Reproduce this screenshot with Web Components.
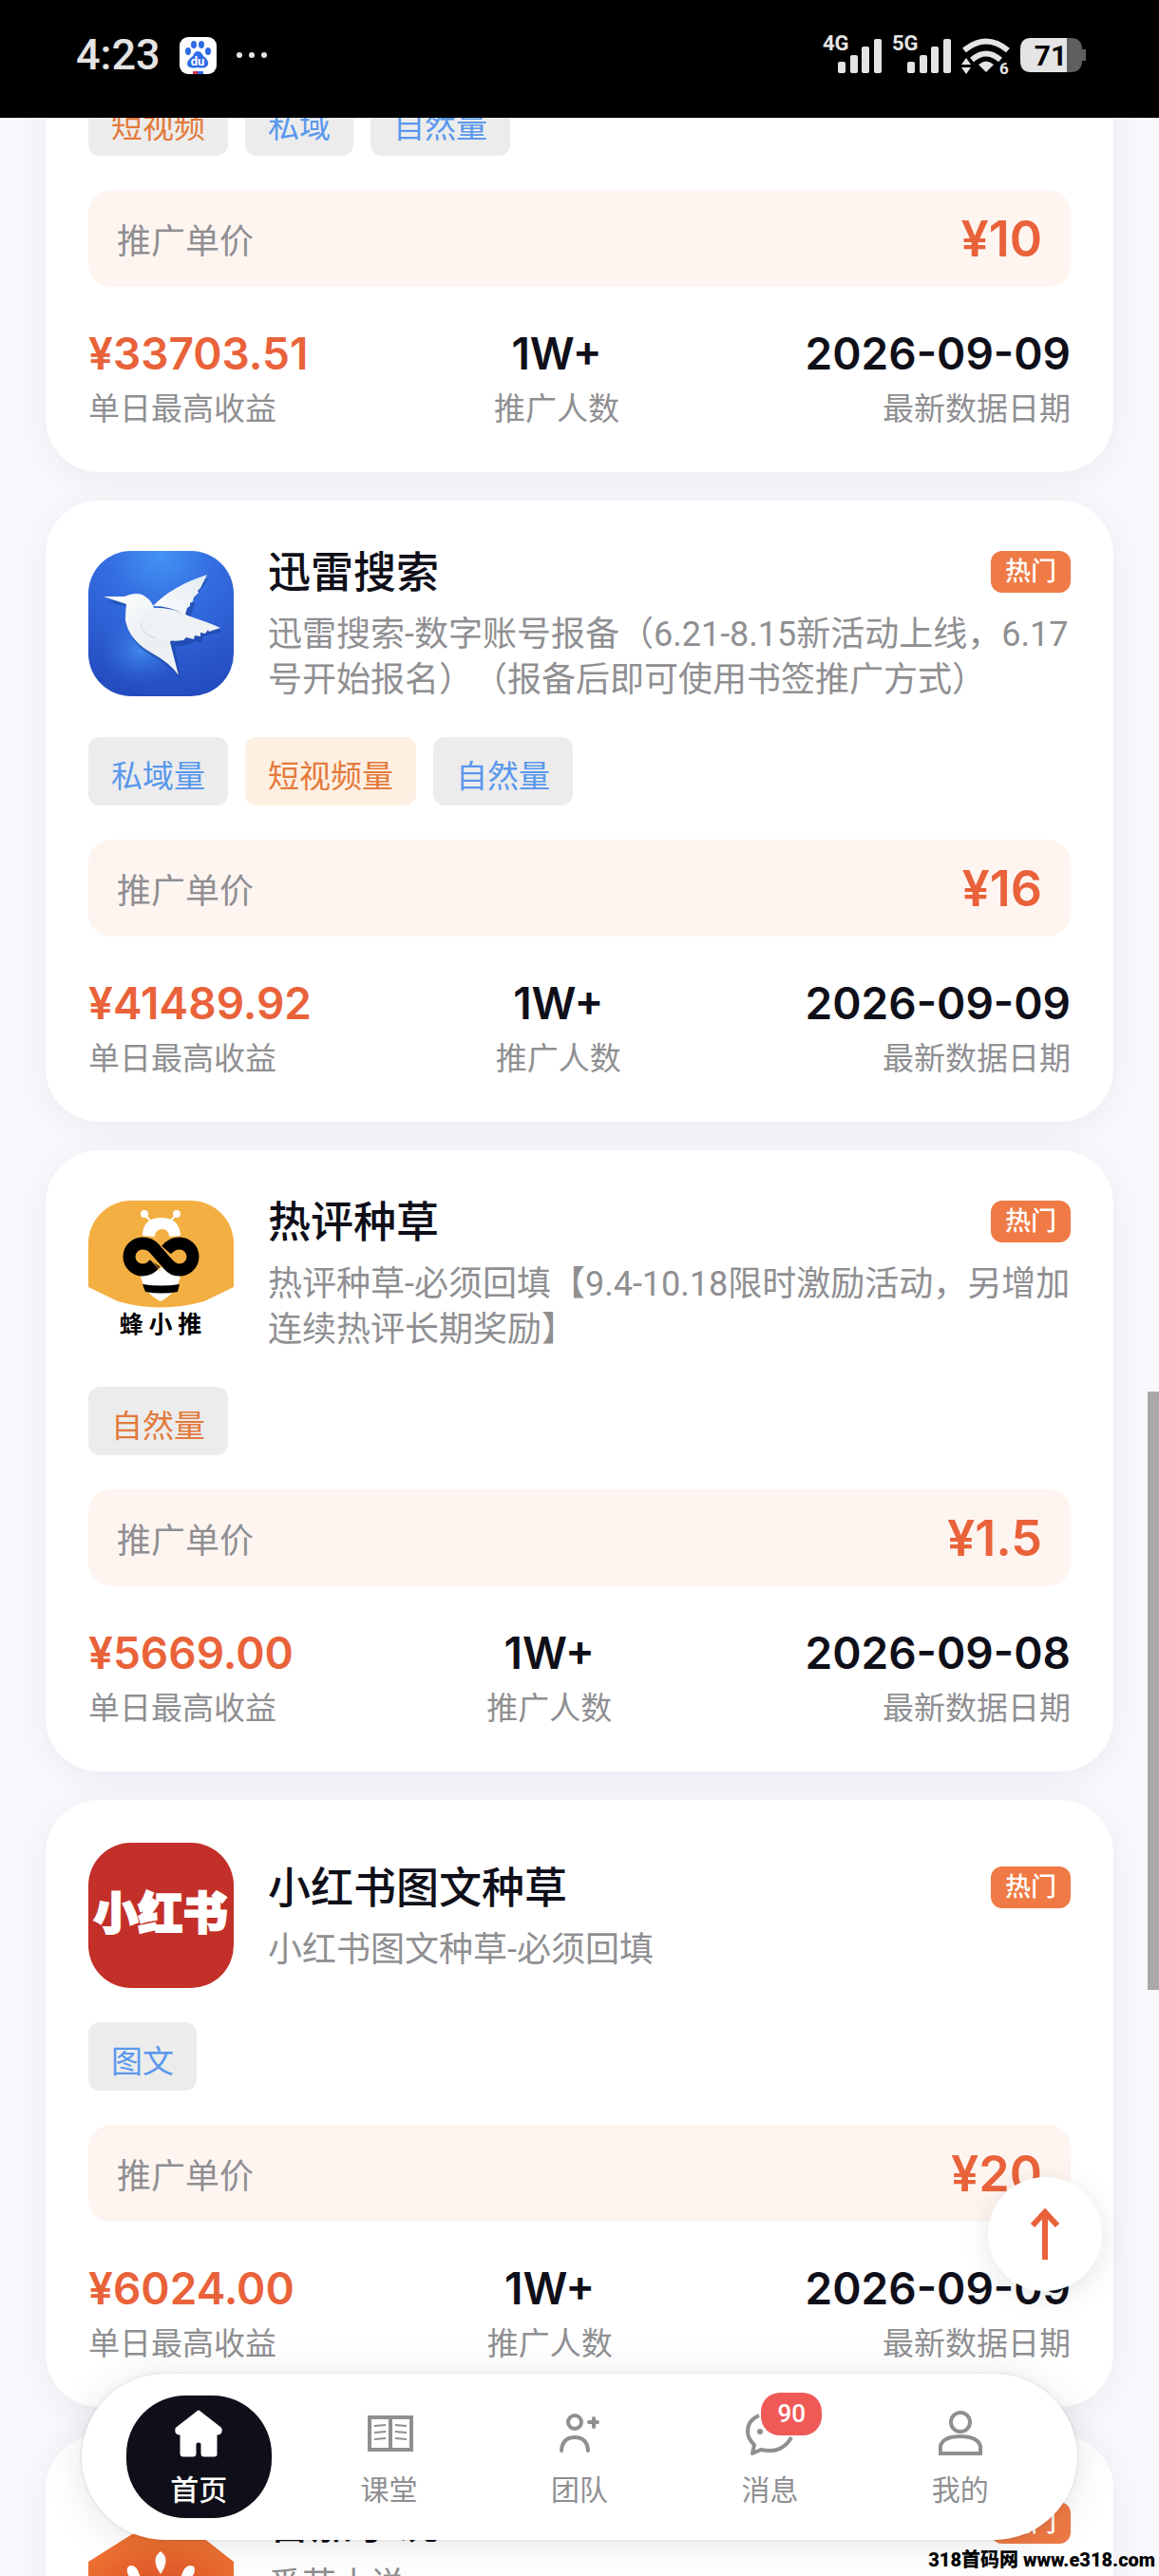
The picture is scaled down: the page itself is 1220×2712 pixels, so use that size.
<!DOCTYPE html>
<html lang="zh-CN">
<head>
<meta charset="UTF-8">
<meta name="viewport" content="width=device-width, initial-scale=1">
<title>首页</title>
<style>
  * { box-sizing: border-box; }
  html, body { height: 100%; margin: 0; }
  body {
    font-family: Roboto, "Noto Sans CJK SC", sans-serif;
    color: #0f0f19;
    background: #f9f9fd;
    text-spacing-trim: space-all;
    --accent: #e9623a;
    --muted: #8f8f92;
    --number-font: Inter, "Noto Sans CJK SC", sans-serif;
  }
</style>
</head>
<body>

<app-shell>
  <status-bar slot="status" time="4:23"></status-bar>

  <task-card price="¥10" income="¥33703.51" people="1W+" date="2026-09-09">
    <task-tag slot="tags" tone="orange">短视频</task-tag>
    <task-tag slot="tags">私域</task-tag>
    <task-tag slot="tags">自然量</task-tag>
  </task-card>

  <task-card name="迅雷搜索" desc="迅雷搜索-数字账号报备（6.21-8.15新活动上线，6.17号开始报名）（报备后即可使用书签推广方式）" price="¥16" income="¥41489.92" people="1W+" date="2026-09-09">
    <svg slot="logo" viewBox="0 0 153 153" aria-hidden="true">
      <defs>
        <radialGradient id="sky" cx=".5" cy=".02" r="1"><stop offset="0" stop-color="#4494f3"/><stop offset=".35" stop-color="#346fe2"/><stop offset="1" stop-color="#244bc0"/></radialGradient>
        <radialGradient id="glow"><stop offset="0" stop-color="#469bf4" stop-opacity=".7"/><stop offset="1" stop-color="#346fe2" stop-opacity="0"/></radialGradient>
        <linearGradient id="body" x1="0" y1="0" x2="1" y2="1"><stop offset="0" stop-color="#fff"/><stop offset=".6" stop-color="#e9eef2"/><stop offset="1" stop-color="#f4f6f8"/></linearGradient>
        <linearGradient id="wing" x1="1" y1="0" x2="0" y2="1"><stop offset="0" stop-color="#dfe8f0"/><stop offset="1" stop-color="#fff"/></linearGradient>
      </defs>
      <rect width="153" height="153" fill="url(#sky)"/>
      <ellipse cx="55" cy="105" rx="42" ry="36" fill="url(#glow)"/>
      <path d="M18 51L40 57Q42 66 41 78Q45 97 65 108Q84 118 96 133L90 98Q104 99 112 93L118 95L120 88L140 83Q128 73 106 67L112 52L107 53L126 27Q99 34 69 60Q62 48 49 47L36 50Z" fill="#17398f" opacity=".45" transform="translate(1 2)"/>
      <path d="M16 48L38 48Q52 42 60 48Q67 53 69 60Q91 59 108 70L102 76L86 96L95 131Q86 118 66 107Q43 94 39 73Q39 64 40 56Q28 52 16 48Z" fill="url(#body)"/>
      <path d="M68 58Q88 37 125 25L118 39L115 42L116 44L111 49L110 53L107 55L107 58L104 60L102 67Q86 58 68 58Z" fill="url(#wing)"/>
      <path d="M68 60Q89 60 104 68Q126 75 139 81L127 85L126 83L123 87L118 86L118 90L112 89L111 93L103 91L100 94Q83 97 64 88Q56 84 55 76Q57 63 68 60Z" fill="#eef2f4"/>
      <path d="M55 76Q57 88 71 92" fill="none" stroke="#cbd5dd" stroke-width="1"/>
    </svg>
    <task-tag slot="tags">私域量</task-tag>
    <task-tag slot="tags" tone="orange" filled>短视频量</task-tag>
    <task-tag slot="tags">自然量</task-tag>
  </task-card>

  <task-card name="热评种草" desc="热评种草-必须回填【9.4-10.18限时激励活动，另增加连续热评长期奖励】" price="¥1.5" income="¥5669.00" people="1W+" date="2026-09-08">
    <svg slot="logo" viewBox="0 0 153 153">
      <rect width="153" height="153" fill="#fff"/>
      <path d="M0 0H153V91L122 106Q76 119 31 106L0 91Z" fill="#f3af42"/>
      <path d="M65 21L59 14M87 21L93 14" stroke="#fff" stroke-width="2"/>
      <circle cx="59" cy="14" r="4" fill="#fff"/><circle cx="93" cy="14" r="4" fill="#fff"/>
      <path d="M57 37Q57 18 77 18Q96 18 97 37L85 38Q85 30 77 30Q70 31 70 38Z" fill="#fff"/>
      <path d="M77 70Q87 77 97 79Q94 97 76 106Q58 97 55 79Q68 78 77 70Z" fill="#fff"/>
      <path d="M57 88Q77 91 96 88L94 96Q77 99 60 96Z"/>
      <path d="M70 66Q65 73 57 73A14 14 0 0 1 57 45Q65 45 70 51L84 67Q89 73 96 73A14 14 0 0 0 96 45Q88 45 82 52" fill="none" stroke="#000" stroke-width="13"/>
      <path d="M77 48L88 61M63 59L76 74" stroke="#f3af42" stroke-width="1"/>
      <text x="76" y="139" text-anchor="middle" font-family="Noto Sans CJK SC, sans-serif" font-size="25" font-weight="700">蜂 小 推</text>
    </svg>
    <task-tag slot="tags" tone="orange">自然量</task-tag>
  </task-card>

  <task-card name="小红书图文种草" desc="小红书图文种草-必须回填" price="¥20" income="¥6024.00" people="1W+" date="2026-09-09">
    <svg slot="logo" viewBox="0 0 153 153">
      <rect width="153" height="153" fill="#c33029"/>
      <text x="76" y="91" text-anchor="middle" font-family="Noto Sans CJK SC, sans-serif" font-size="47" font-weight="900" fill="#fff" stroke="#fff" stroke-width="2">小红书</text>
    </svg>
    <task-tag slot="tags">图文</task-tag>
  </task-card>

  <task-card name="番茄小说" desc="番茄小说">
    <svg slot="logo" viewBox="0 0 153 153" aria-hidden="true">
      <defs><radialGradient id="tomato" cx=".5" cy=".7" r=".6"><stop offset="0" stop-color="#d94b25"/><stop offset="1" stop-color="#ec6f31"/></radialGradient></defs>
      <path d="M0 88L46 59H116L153 88V153H0Z" fill="url(#tomato)"/>
      <path d="M76 101Q65 85 76 77Q87 85 76 101Z" fill="#fff"/>
      <path d="M57 116Q36 102 42 93Q53 87 57 116ZM95 116Q116 102 111 93Q99 87 95 116Z" fill="#fff"/>
    </svg>
  </task-card>

  <back-top slot="overlay"></back-top>

  <tab-bar slot="overlay">
    <tab-item label="首页" active>
      <svg viewBox="0 0 50 50"><path fill="currentColor" stroke="currentColor" stroke-width="3" stroke-linejoin="round" d="M25 2L48 20Q49 25 45 25H43V47Q43 48 41 48H31Q29 48 29 46V36Q29 33 25 33Q21 33 21 36V46Q21 48 19 48H9Q7 48 7 46V25H5Q1 25 2 20Z"/></svg>
    </tab-item>
    <tab-item label="课堂">
      <svg viewBox="0 0 50 50"><g fill="none" stroke="currentColor"><path stroke-width="4" d="M4 8H48V42H4ZM26 8V42"/><path stroke-width="2" d="M9 17L21 16M9 24L21 23M9 31L21 30M31 16L43 17M31 23L43 24M31 30L43 31"/></g></svg>
    </tab-item>
    <tab-item label="团队">
      <svg viewBox="0 0 50 50"><g fill="none" stroke="currentColor" stroke-width="4" stroke-linecap="round"><circle cx="20" cy="13" r="7"/><path d="M6 43Q7 29 20 29Q33 29 34 43M35 13H44M40 9V18"/></g></svg>
    </tab-item>
    <tab-item label="消息" count="90">
      <svg viewBox="0 0 50 50"><path fill="none" stroke="currentColor" stroke-width="4" stroke-linejoin="round" d="M14 6Q2 11 2 23Q2 30 9 37L7 46L16 42Q38 47 48 29"/><circle cx="15" cy="23" r="3" fill="currentColor"/></svg>
    </tab-item>
    <tab-item label="我的">
      <svg viewBox="0 0 50 50"><g fill="none" stroke="currentColor" stroke-width="4"><circle cx="25" cy="13" r="10"/><path d="M4 46V38Q7 28 25 28Q43 28 46 38V46Z"/></g></svg>
    </tab-item>
  </tab-bar>

  <site-mark slot="overlay">318首码网 www.e318.com</site-mark>
</app-shell>

<script>
// Base class: renders a template into an open shadow root
class BaseElement extends HTMLElement {
  constructor() {
    super();
    this.attachShadow({ mode: 'open' });
  }

  connectedCallback() {
    this.shadowRoot.innerHTML = `<style>* { box-sizing: border-box; }</style>${this.template()}`;
  }

  attr(name) {
    return this.getAttribute(name) || '';
  }
}

// Phone status bar: time on the left, signal and battery on the right
class StatusBar extends BaseElement {
  signal(label) {
    return `
      <svg width="63" height="62" viewBox="0 -10 63 62">
        <text x="0" y="16" font-size="22" font-weight="700">${label}</text>
        <rect x="16" y="28" width="8" height="12" rx="2"/>
        <rect x="29" y="21" width="8" height="19" rx="2"/>
        <rect x="41" y="12" width="8" height="28" rx="2"/>
        <rect x="54" y="4" width="8" height="36" rx="2"/>
      </svg>`;
  }

  template() {
    return `
      <style>
        :host {
          display: flex;
          align-items: center;
          justify-content: space-between;
          height: 124px;
          padding: 0 76px 8px 80px;
          background: #000;
          color: #e4e4e4;
        }
        .side { display: flex; align-items: center; }
        .left { gap: 20px; }
        .right { gap: 10px; }
        time { font-size: 45px; line-height: 48px; font-weight: 500; }
        svg { display: block; fill: currentColor; }
      </style>
      <div class="side left">
        <time>${this.attr('time')}</time>
        <svg width="39" height="39" viewBox="0 0 39 39">
          <rect width="39" height="39" rx="9" fill="#fff"/>
          <g fill="#2f6be6">
            <ellipse cx="15" cy="8" rx="3" ry="4"/><ellipse cx="23" cy="8" rx="3" ry="4"/>
            <ellipse cx="9" cy="15" rx="3" ry="4"/><ellipse cx="30" cy="15" rx="3" ry="4"/>
            <path d="M19 15Q23 15 25 20Q31 24 30 29Q28 34 19 32Q10 34 8 29Q8 24 14 20Q16 15 19 15Z"/>
          </g>
          <path d="M14 36H19V39H14Z" fill="#d8324a"/><path d="M19 36H25V39H19Z" fill="#2f6be6"/>
          <text x="19" y="30" text-anchor="middle" font-size="13" font-weight="700" fill="#fff">du</text>
        </svg>
        <svg width="34" height="8" viewBox="0 0 34 8"><circle cx="4" cy="4" r="3"/><circle cx="17" cy="4" r="3"/><circle cx="30" cy="4" r="3"/></svg>
      </div>
      <div class="side right">
        ${this.signal('4G')}
        ${this.signal('5G')}
        <svg width="51" height="62" viewBox="0 -10 51 62">
          <g fill="none" stroke="currentColor" stroke-width="6">
            <path d="M3 16Q26 -3 49 16"/><path d="M11 26Q26 13 41 26"/>
          </g>
          <path d="M18 31Q26 24 34 31L26 39ZM0 31L5 24L10 31ZM0 34H10L5 41Z"/>
          <text x="40" y="41" font-size="17" font-weight="700">6</text>
        </svg>
        <svg width="71" height="38" viewBox="0 0 71 38">
          <path d="M50 1H54Q66 1 66 13H70V25H66Q66 37 54 37H50Z" fill="#5f5f5f"/>
          <path d="M12 1H50V37H12Q1 37 1 25V13Q1 1 12 1Z"/>
          <text x="33" y="30" text-anchor="middle" font-size="30" font-weight="700" fill="#000">71</text>
        </svg>
      </div>
    `;
  }
}

// Traffic type pill
class TaskTag extends BaseElement {
  template() {
    const color = this.attr('tone') === 'orange' ? '#e37a3b' : '#5a98ec';
    const background = this.hasAttribute('filled') ? '#fdefe2' : '#ececec';

    return `
      <style>
        :host {
          display: flex;
          align-items: center;
          height: 72px;
          padding: 12px 24px 0;
          border-radius: 12px;
          font-size: 33px;
          line-height: 48px;
          color: ${color};
          background: ${background};
        }
      </style>
      <slot></slot>
    `;
  }
}

// Promotion task card
class TaskCard extends BaseElement {
  head() {
    if (!this.hasAttribute('name')) return '';
    return `
      <header>
        <div class="logo"><slot name="logo"></slot></div>
        <div class="info">
          <div class="title">
            <h2>${this.attr('name')}</h2>
            <span class="hot">热门</span>
          </div>
          <p>${this.attr('desc')}</p>
        </div>
      </header>`;
  }

  figures() {
    if (!this.hasAttribute('price')) return '';
    return `
      <div class="tags"><slot name="tags"></slot></div>
      <div class="price"><span>推广单价</span><strong>${this.attr('price')}</strong></div>
      <dl>
        <div><dd class="income">${this.attr('income')}</dd><dt>单日最高收益</dt></div>
        <div><dd>${this.attr('people')}</dd><dt>推广人数</dt></div>
        <div><dd>${this.attr('date')}</dd><dt>最新数据日期</dt></div>
      </dl>`;
  }

  template() {
    return `
      <style>
        :host { display: block; }
        article {
          display: flex;
          flex-direction: column;
          gap: 36px;
          padding: 45px;
          border-radius: 56px;
          background: #fff;
          box-shadow: 0 6px 36px rgba(20, 20, 50, 0.07);
        }
        header { display: flex; align-items: center; gap: 36px; }
        .logo {
          flex: none;
          width: 153px;
          height: 153px;
          border-radius: 45px;
          overflow: hidden;
        }
        ::slotted(svg) { display: block; width: 100%; height: 100%; }
        .info { flex: 1; min-width: 0; }
        .title {
          display: flex;
          align-items: center;
          justify-content: space-between;
          margin-bottom: 12px;
        }
        h2, p, dl, dd { margin: 0; }
        h2 { padding-top: 4px; font-size: 45px; line-height: 56px; font-weight: 500; }
        .hot {
          padding: 0 15px;
          border-radius: 12px;
          font-size: 27px;
          line-height: 44px;
          font-weight: 500;
          color: #fff;
          background: #ef7a45;
        }
        p { font-size: 36px; line-height: 48px; color: var(--muted); }
        .tags { display: flex; gap: 18px; }
        .price {
          display: flex;
          align-items: center;
          justify-content: space-between;
          height: 102px;
          padding: 0 30px;
          border-radius: 24px;
          font-size: 36px;
          color: var(--muted);
          background: #fef5f1;
        }
        strong, dd { font-family: var(--number-font); font-weight: 500; }
        strong { font-size: 52px; color: var(--accent); font-weight: 600; }
        dl { display: flex; justify-content: space-between; text-align: center; }
        dl > div:first-child { text-align: left; }
        dl > div:last-child { text-align: right; }
        dd { font-size: 46px; line-height: 68px; font-weight: 600; }
        dt { padding-top: 4px; font-size: 33px; line-height: 42px; color: var(--muted); }
        .income { color: var(--accent); }
      </style>
      <article>${this.head()}${this.figures()}</article>
    `;
  }
}

// Round button that returns to the top of the list
class BackTop extends BaseElement {
  template() {
    return `
      <style>
        :host { position: absolute; right: 60px; bottom: 300px; }
        button {
          display: flex;
          align-items: center;
          justify-content: center;
          width: 120px;
          height: 120px;
          padding: 0;
          border: 0;
          border-radius: 50%;
          color: var(--accent);
          background: #fff;
          box-shadow: 0 6px 30px rgba(0, 0, 0, 0.1);
        }
      </style>
      <button type="button" aria-label="返回顶部">
        <svg width="32" height="56" viewBox="0 0 32 56" fill="none" stroke="currentColor" stroke-width="6"><path d="M16 55V5M3 19L16 5L29 19"/></svg>
      </button>
    `;
  }
}

class TabItem extends BaseElement {
  template() {
    const badge = this.attr('count') ? `<span class="badge">${this.attr('count')}</span>` : '';

    return `
      <style>
        :host { flex: 1; display: flex; justify-content: center; }
        a {
          display: flex;
          flex-direction: column;
          align-items: center;
          gap: 14px;
          width: 153px;
          height: 129px;
          padding-top: 15px;
          border-radius: 62px;
          font-size: 30px;
          line-height: 42px;
          color: var(--muted);
          text-decoration: none;
        }
        :host([active]) a { color: #fff; background: #0f0f19; font-weight: 500; }
        .icon { position: relative; width: 50px; height: 50px; }
        ::slotted(svg) { display: block; width: 50px; height: 50px; }
        .badge {
          position: absolute;
          left: 16px;
          top: -18px;
          padding: 0 17px;
          border-radius: 20px;
          font-size: 26px;
          line-height: 45px;
          font-weight: 500;
          color: #fff;
          background: #ef5a57;
        }
      </style>
      <a href="#"><span class="icon"><slot></slot>${badge}</span>${this.attr('label')}</a>
    `;
  }
}

// Floating bottom navigation
class TabBar extends BaseElement {
  template() {
    return `
      <style>
        :host { position: absolute; left: 86px; right: 86px; bottom: 38px; }
        nav {
          display: flex;
          padding: 23px;
          border-radius: 88px;
          background: #fff;
          box-shadow: 0 0 4px rgba(0, 0, 0, 0.12), 0 4px 45px rgba(0, 0, 0, 0.1);
        }
      </style>
      <nav><slot></slot></nav>
    `;
  }
}

class SiteMark extends BaseElement {
  template() {
    return `
      <style>
        :host {
          position: absolute;
          right: 4px;
          bottom: 2px;
          font-size: 20px;
          line-height: 30px;
          font-weight: 900;
          color: #000;
          text-shadow: 0 0 2px #fff;
        }
      </style>
      <slot></slot>
    `;
  }
}

// Page frame: status bar, scrolling list, floating layer
class AppShell extends BaseElement {
  template() {
    return `
      <style>
        :host {
          display: flex;
          flex-direction: column;
          position: relative;
          height: 100vh;
          overflow: hidden;
        }
        main {
          flex: 1;
          min-height: 0;
          overflow-y: auto;
          scrollbar-width: none;
        }
        .list {
          display: flex;
          flex-direction: column;
          gap: 30px;
          padding: 0 48px 240px;
        }
        .thumb {
          position: absolute;
          top: 1465px;
          right: 0;
          width: 12px;
          height: 630px;
          background: #a9a9a9;
        }
      </style>
      <slot name="status"></slot>
      <main><div class="list"><slot></slot></div></main>
      <div class="thumb"></div>
      <slot name="overlay"></slot>
    `;
  }

  connectedCallback() {
    super.connectedCallback();
    const main = this.shadowRoot.querySelector('main');
    main.scrollTop = 77;
    this.querySelector('back-top').addEventListener('click', () => {
      main.scrollTo({ top: 0, behavior: 'smooth' });
    });
  }
}

customElements.define('status-bar', StatusBar);
customElements.define('task-tag', TaskTag);
customElements.define('task-card', TaskCard);
customElements.define('back-top', BackTop);
customElements.define('tab-item', TabItem);
customElements.define('tab-bar', TabBar);
customElements.define('site-mark', SiteMark);
customElements.define('app-shell', AppShell);
</script>
</body>
</html>
